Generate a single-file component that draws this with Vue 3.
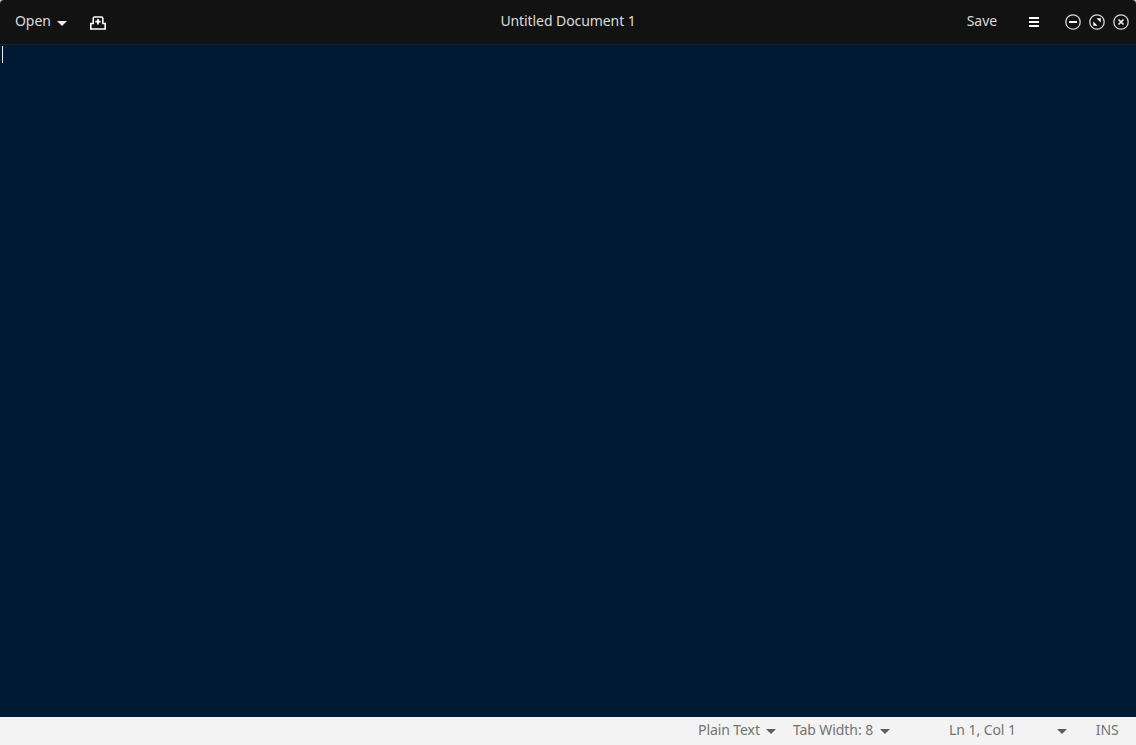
<script setup>
const statusItems = [
  { label: 'Plain Text', cls: 'lang' },
  { label: 'Tab Width: 8', cls: 'tab' },
  { label: 'Ln 1, Col 1', cls: 'pos' },
]
</script>

<template>
  <div class="window">
    <header class="headerbar">
      <div class="start">
        <span class="open">Open</span>
        <span class="caret light open-caret"></span>
        <svg class="newdoc" width="16" height="14" viewBox="0 0 16 14">
          <path d="M3.2 7.5V2.4Q3.2 1 4.6 1h6.8q1.4 0 1.4 1.400v5.100H15.200v5.500H.8V7.500z" fill="none" stroke="#fff" stroke-width="1.6"/>
          <path d="M8 3v5.400M5.300 5.700h5.400" stroke="#fff" stroke-width="1.8" fill="none"/>
        </svg>
      </div>
      <div class="title">Untitled Document 1</div>
      <div class="end">
        <span class="save">Save</span>
        <svg class="menu" width="10" height="10" viewBox="0 0 10 10">
          <path d="M0 1h10M0 5h10M0 9h10" stroke="#fff" stroke-width="2"/>
        </svg>
        <div class="wm">
          <svg width="16" height="16" viewBox="0 0 16 16">
            <circle cx="8" cy="8" r="7.2" fill="none" stroke="#d8d8d8" stroke-width="1.3"/>
            <rect x="4" y="7" width="8" height="2" fill="#fff"/>
          </svg>
          <svg width="16" height="16" viewBox="0 0 16 16">
            <circle cx="8" cy="8" r="7.2" fill="none" stroke="#d8d8d8" stroke-width="1.3"/>
            <path d="M7.500 4.300h4.200V8.500zM8.500 11.700H4.300V7.500z" fill="#fff"/>
          </svg>
          <svg width="16" height="16" viewBox="0 0 16 16">
            <circle cx="8" cy="8" r="7.2" fill="none" stroke="#d8d8d8" stroke-width="1.3"/>
            <path d="M5.500 5.500l5 5M10.500 5.500l-5 5" stroke="#f0f0f0" stroke-width="1.700" fill="none"/>
          </svg>
        </div>
      </div>
    </header>
    <main class="editor">
      <div class="cursor"></div>
    </main>
    <footer class="statusbar">
      <span v-for="item in statusItems" :key="item.label" class="status-item" :class="item.cls">
        <span>{{ item.label }}</span>
        <span class="caret dark"></span>
      </span>
      <span class="ins">INS</span>
    </footer>
  </div>
</template>

<style>
html, body { margin: 0; background: #cfcfcf; }
</style>

<style scoped>
.window {
  width: 1136px;
  height: 745px;
  display: flex;
  flex-direction: column;
  overflow: hidden;
  font-family: "Noto Sans", "Open Sans", sans-serif;
  font-size: 14px;
  letter-spacing: -0.08px;
  border-radius: 4px 4px 0 0;
}
.headerbar {
  height: 44px;
  flex: none;
  background: #121212;
  border-bottom: 1px solid #1a2026;
  box-sizing: content-box;
  display: flex;
  align-items: center;
  position: relative;
  color: #dcdcdc;
  line-height: 18px;
}
.start { display: flex; align-items: center; padding-left: 15px; }
.open { position: relative; top: -1px; }
.save { position: relative; top: -1px; }
.open-caret { margin-left: 6px; }
.newdoc { margin-left: 23px; margin-top: 1px; }
.title {
  position: absolute;
  left: 0;
  right: 0;
  top: 12px;
  text-align: center;
}
.end { margin-left: auto; display: flex; align-items: center; padding-right: 7px; }
.menu { margin-left: 32px; }
.wm { margin-left: 26px; display: flex; gap: 8px; }
.editor { flex: 1; background: #001a33; min-height: 0; }
.cursor { width: 1px; height: 17px; margin: 1px 0 0 2px; background: #f2f2f2; }
.statusbar {
  height: 28px;
  flex: none;
  background: #f3f3f3;
  color: #727272;
  display: flex;
  align-items: center;
  line-height: 18px;
  padding-bottom: 2px;
  box-sizing: border-box;
}
.status-item { display: flex; align-items: center; }
.lang { margin-left: 698px; }
.lang .caret { margin-left: 6px; }
.tab { margin-left: 17px; }
.tab .caret { margin-left: 7px; }
.pos { margin-left: 59px; }
.pos .caret { margin-left: 41px; }
.ins { margin-left: 29px; }
.caret {
  width: 0;
  height: 0;
  border-left: 5px solid transparent;
  border-right: 5px solid transparent;
  display: inline-block;
  margin-top: 2px;
}
.caret.light { border-top: 5px solid #eee; }
.caret.dark { border-top: 5px solid #5c5c5c; }
</style>
